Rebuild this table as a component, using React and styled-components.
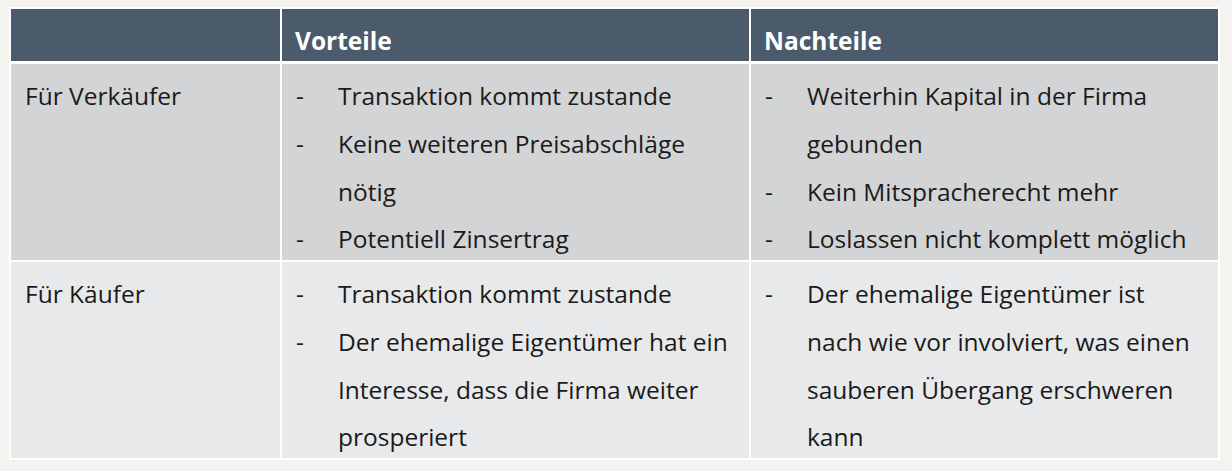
import React from "react";
import styled, { createGlobalStyle } from "styled-components";

const GlobalStyle = createGlobalStyle`
  html, body {
    margin: 0;
    padding: 0;
    background-color: #f4f3ef;
  }
  body {
    font-family: "Open Sans", "Noto Sans", sans-serif;
    color: #1a1a1a;
  }
`;

const Page = styled.div`
  width: 1232px;
  height: 471px;
  padding: 7px 0 0 9px;
  box-sizing: border-box;
`;

const Table = styled.div`
  display: grid;
  grid-template-columns: 269px 467px 467px;
  grid-template-rows: 53px 196px 196px;
  gap: 2px;
  padding: 2px;
  width: max-content;
  background-color: #ffffff;
`;

const HeadCell = styled.div`
  background-color: #4b5b6b;
  color: #ffffff;
  font-weight: 700;
  font-size: 24.5px;
  line-height: 36px;
  padding: 14px 13px 0;
  margin-bottom: 1px;
  box-sizing: border-box;
`;

const Cell = styled.div`
  background-color: ${props => (props.$alt ? "#e8e9eb" : "#d3d4d6")};
  font-size: 24.5px;
  line-height: 47.8px;
  padding: 8px 12px 0 14px;
  overflow: visible;
`;

const List = styled.ul`
  list-style: none;
  margin: 0;
  padding: 0;
`;

const Item = styled.li`
  display: flex;
`;

const Dash = styled.span`
  flex: 0 0 42px;
`;

const rows = [
  {
    label: "Für Verkäufer",
    pros: [
      "Transaktion kommt zustande",
      "Keine weiteren Preisabschläge nötig",
      "Potentiell Zinsertrag"
    ],
    cons: [
      "Weiterhin Kapital in der Firma gebunden",
      "Kein Mitspracherecht mehr",
      "Loslassen nicht komplett möglich"
    ]
  },
  {
    label: "Für Käufer",
    alt: true,
    pros: [
      "Transaktion kommt zustande",
      "Der ehemalige Eigentümer hat ein Interesse, dass die Firma weiter prosperiert"
    ],
    cons: [
      "Der ehemalige Eigentümer ist nach wie vor involviert, was einen sauberen Übergang erschweren kann"
    ]
  }
];

const Points = ({ items }) => (
  <List>
    {items.map(text => (
      <Item key={text}>
        <Dash>-</Dash>
        <span>{text}</span>
      </Item>
    ))}
  </List>
);

const App = () => {
  return (
    <Page>
      <GlobalStyle />
      <Table>
        <HeadCell />
        <HeadCell>Vorteile</HeadCell>
        <HeadCell>Nachteile</HeadCell>
        {rows.map(row => (
          <React.Fragment key={row.label}>
            <Cell $alt={row.alt}>{row.label}</Cell>
            <Cell $alt={row.alt}>
              <Points items={row.pros} />
            </Cell>
            <Cell $alt={row.alt}>
              <Points items={row.cons} />
            </Cell>
          </React.Fragment>
        ))}
      </Table>
    </Page>
  );
};

export default App;
